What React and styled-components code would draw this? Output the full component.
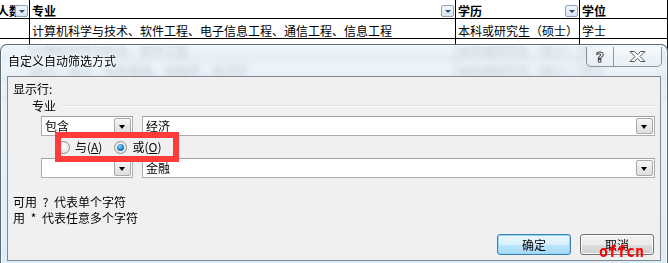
import React from "react";
import styled, { createGlobalStyle } from "styled-components";

const GlobalStyle = createGlobalStyle`
  html, body {
    margin: 0;
    padding: 0;
    background: #fff;
  }
  body {
    font-family: "Noto Sans CJK SC", "DejaVu Sans", sans-serif;
    font-size: 12px;
    color: #000;
  }
`;

const FONT = `"Noto Sans CJK SC", "DejaVu Sans", sans-serif`;

const sheetRows = [
  ["人数", "专业", "学历", "学位"],
  ["", "计算机科学与技术、软件工程、电子信息工程、通信工程、信息工程", "本科或研究生（硕士）", "学士"],
  ["", "计算机科学与技术、软件工程", "本科或研究生（硕士）", "学士"],
  ["", "会计、审计、财务管理、金融学、经济学", "本科或研究生（硕士）", "学士"],
  ["", "中国语言文学、新闻传播学、汉语言", "本科或研究生（硕士）", "学士"],
];

const App = () => {
  return (
    <>
      <GlobalStyle />
      <Desktop>
        <Sheet>
          {sheetRows.map((row, r) =>
            row.map((cell, c) => (
              <Cell key={`${r}-${c}`} $first={c === 0}>
                <CellText $header={r === 0} $first={c === 0}>
                  {cell}
                </CellText>
                {r === 0 && c < 3 && <FilterButton />}
              </Cell>
            ))
          )}
        </Sheet>

        <Dialog>
          <TitleBar>自定义自动筛选方式</TitleBar>
          <CaptionButtons>
            <CaptionButton>
              <HelpGlyph>?</HelpGlyph>
            </CaptionButton>
            <CaptionButton $wide>
              <svg width="19" height="13" viewBox="0 0 19 13">
                <path
                  d="M2 1.5h4.5l3 3.2 3-3.2h4.5l-5 5 5 5h-4.5l-3-3.2-3 3.2h-4.5l5-5z"
                  fill="#fff"
                  stroke="#555"
                  strokeWidth="1"
                  strokeLinejoin="round"
                />
              </svg>
            </CaptionButton>
          </CaptionButtons>

          <Client>
            <ShowLabel>显示行:</ShowLabel>
            <GroupHeader>
              <span>专业</span>
              <GroupLine />
            </GroupHeader>

            <CriteriaRow>
              <Combo $width={92}>
                <ComboText>包含</ComboText>
                <DropButton />
              </Combo>
              <Combo $grow>
                <ComboText>经济</ComboText>
                <DropButton />
              </Combo>
            </CriteriaRow>

            <RadioRow>
              <RadioItem>
                <Radio />
                <span>
                  与(<u>A</u>)
                </span>
              </RadioItem>
              <RadioItem>
                <Radio $checked />
                <span>
                  或(<u>O</u>)
                </span>
              </RadioItem>
            </RadioRow>

            <CriteriaRow>
              <Combo $width={92}>
                <ComboText />
                <DropButton />
              </Combo>
              <Combo $grow>
                <ComboText>金融</ComboText>
                <DropButton />
              </Combo>
            </CriteriaRow>

            <Hints>
              <div>可用 ? 代表单个字符</div>
              <div>用 * 代表任意多个字符</div>
            </Hints>

            <ButtonRow>
              <PushButton $default>确定</PushButton>
              <PushButton>取消</PushButton>
            </ButtonRow>
          </Client>
        </Dialog>

        <Highlight />
        <Watermark>offcn</Watermark>
      </Desktop>
    </>
  );
};

export default App;

const Desktop = styled.div`
  position: relative;
  width: 668px;
  height: 263px;
  overflow: hidden;
  background: #fff;
`;

const Sheet = styled.div`
  display: grid;
  grid-template-columns: 30px 426px 124px 1fr;
  grid-auto-rows: 20px;
  margin-top: -1px;
`;

const Cell = styled.div`
  position: relative;
  display: flex;
  align-items: flex-end;
  border-right: 1px solid #000;
  border-bottom: 1px solid #000;
  overflow: hidden;
  padding-left: ${(p) => (p.$first ? 0 : 2)}px;
  box-sizing: border-box;
`;

const CellText = styled.span`
  font-family: ${FONT};
  font-size: 12px;
  line-height: 15px;
  font-weight: ${(p) => (p.$header ? 700 : 400)};
  white-space: nowrap;
  margin-left: ${(p) => (p.$first ? -3 : 0)}px;
`;

const FilterButton = styled.div`
  position: absolute;
  right: 1px;
  bottom: 1px;
  width: 13px;
  height: 12px;
  box-sizing: border-box;
  border: 1px solid #8ea4c0;
  border-radius: 2px;
  background: linear-gradient(#f4f8fc, #d8e4f1);
  &::after {
    content: "";
    position: absolute;
    left: 3px;
    top: 4px;
    border-left: 3px solid transparent;
    border-right: 3px solid transparent;
    border-top: 3px solid #2b4a7a;
  }
`;

const Dialog = styled.div`
  position: absolute;
  left: 0;
  top: 44px;
  width: 668px;
  height: 225px;
  box-sizing: border-box;
  display: flex;
  flex-direction: column;
  border: 1px solid rgba(50, 60, 70, 0.75);
  border-radius: 7px 7px 0 0;
  background: linear-gradient(
    rgba(232, 242, 250, 0.82),
    rgba(214, 232, 246, 0.82)
  );
  backdrop-filter: blur(3px);
  box-shadow: inset 0 0 0 1px rgba(255, 255, 255, 0.7);
`;

const TitleBar = styled.div`
  height: 31px;
  padding-left: 7px;
  display: flex;
  align-items: center;
  font-family: ${FONT};
  font-size: 12px;
  color: #000;
  text-shadow: 0 0 6px #fff, 0 0 4px #fff;
`;

const CaptionButtons = styled.div`
  position: absolute;
  top: 2px;
  right: 5px;
  display: flex;
  height: 19px;
  border: 1px solid rgba(70, 80, 90, 0.6);
  border-top: none;
  border-radius: 0 0 5px 5px;
  overflow: hidden;
  background: linear-gradient(rgba(255, 255, 255, 0.55), rgba(230, 238, 246, 0.4));
`;

const CaptionButton = styled.div`
  width: ${(p) => (p.$wide ? 47 : 26)}px;
  display: flex;
  align-items: center;
  justify-content: center;
  & + & {
    border-left: 1px solid rgba(70, 80, 90, 0.55);
  }
`;

const HelpGlyph = styled.span`
  font-family: "DejaVu Sans", sans-serif;
  font-weight: 700;
  font-size: 14px;
  line-height: 14px;
  color: #fff;
  -webkit-text-stroke: 1px #444;
`;

const Client = styled.div`
  flex: 1;
  margin: 0 6px 7px 6px;
  border: 1px solid #828790;
  background: #f0f0f0;
  padding: 5px;
  display: flex;
  flex-direction: column;
  font-family: ${FONT};
  font-size: 12px;
  line-height: 14px;
`;

const ShowLabel = styled.div`
  height: 14px;
`;

const GroupHeader = styled.div`
  margin-top: 3px;
  height: 14px;
  padding-left: 19px;
  display: flex;
  align-items: center;
`;

const GroupLine = styled.div`
  flex: 1;
  margin-left: 5px;
  border-top: 1px solid #d5dfe5;
  border-bottom: 1px solid #fff;
`;

const CriteriaRow = styled.div`
  margin-top: 3px;
  height: 20px;
  padding-left: 28px;
  display: flex;
  gap: 9px;
`;

const Combo = styled.div`
  width: ${(p) => (p.$grow ? "auto" : `${p.$width}px`)};
  flex: ${(p) => (p.$grow ? 1 : "none")};
  box-sizing: border-box;
  border: 1px solid #abadb3;
  border-top-color: #a0a0a0;
  background: #fff;
  display: flex;
  align-items: stretch;
  padding: 1px;
`;

const ComboText = styled.div`
  flex: 1;
  padding-left: 2px;
  line-height: 16px;
`;

const DropButton = styled.div`
  width: 17px;
  box-sizing: border-box;
  border: 1px solid #a8a8a8;
  border-radius: 2px;
  background: linear-gradient(#f6f6f6, #dedede);
  position: relative;
  &::after {
    content: "";
    position: absolute;
    left: 4px;
    top: 6px;
    border-left: 3.5px solid transparent;
    border-right: 3.5px solid transparent;
    border-top: 4px solid #000;
  }
`;

const RadioRow = styled.div`
  margin-top: 3px;
  height: 16px;
  padding-left: 44px;
  display: flex;
  align-items: center;
  gap: 12px;
`;

const RadioItem = styled.label`
  display: flex;
  align-items: center;
  gap: 5px;
  u {
    text-decoration: underline;
  }
`;

const Radio = styled.span`
  width: 13px;
  height: 13px;
  box-sizing: border-box;
  border-radius: 50%;
  border: 1px solid #8e8f8f;
  background: radial-gradient(circle at 50% 40%, #fff, #dcdcdc);
  position: relative;
  &::after {
    content: "";
    display: ${(p) => (p.$checked ? "block" : "none")};
    position: absolute;
    left: 2px;
    top: 2px;
    width: 7px;
    height: 7px;
    border-radius: 50%;
    background: radial-gradient(circle at 40% 35%, #8fd4ff, #1f7fc4 55%, #0d4f85);
  }
`;

const Hints = styled.div`
  margin-top: 16px;
  line-height: 16px;
  word-spacing: 3px;
`;

const ButtonRow = styled.div`
  margin-top: auto;
  display: flex;
  justify-content: flex-end;
  gap: 9px;
  padding-right: 1px;
`;

const PushButton = styled.button`
  width: 74px;
  height: 21px;
  box-sizing: border-box;
  font-family: ${FONT};
  font-size: 12px;
  color: #000;
  padding: 0;
  border-radius: 3px;
  border: 1px solid ${(p) => (p.$default ? "#3c7fb1" : "#707070")};
  background: ${(p) =>
    p.$default
      ? "linear-gradient(#eaf6fd 0%, #d9f0fc 50%, #bee6fd 51%, #a7d9f5 100%)"
      : "linear-gradient(#f2f2f2 0%, #ebebeb 50%, #dddddd 51%, #cfcfcf 100%)"};
  box-shadow: inset 0 0 0 1px ${(p) => (p.$default ? "#92d6f8" : "#fcfcfc")};
`;

const Highlight = styled.div`
  position: absolute;
  left: 55px;
  top: 132px;
  width: 124px;
  height: 30px;
  box-sizing: border-box;
  border: 6px solid #ff3b3b;
  pointer-events: none;
`;

const Watermark = styled.div`
  position: absolute;
  left: 599px;
  top: 245px;
  font-family: "DejaVu Sans Mono", monospace;
  font-weight: 700;
  font-size: 15px;
  line-height: 15px;
  color: #ff0000;
  pointer-events: none;
`;
